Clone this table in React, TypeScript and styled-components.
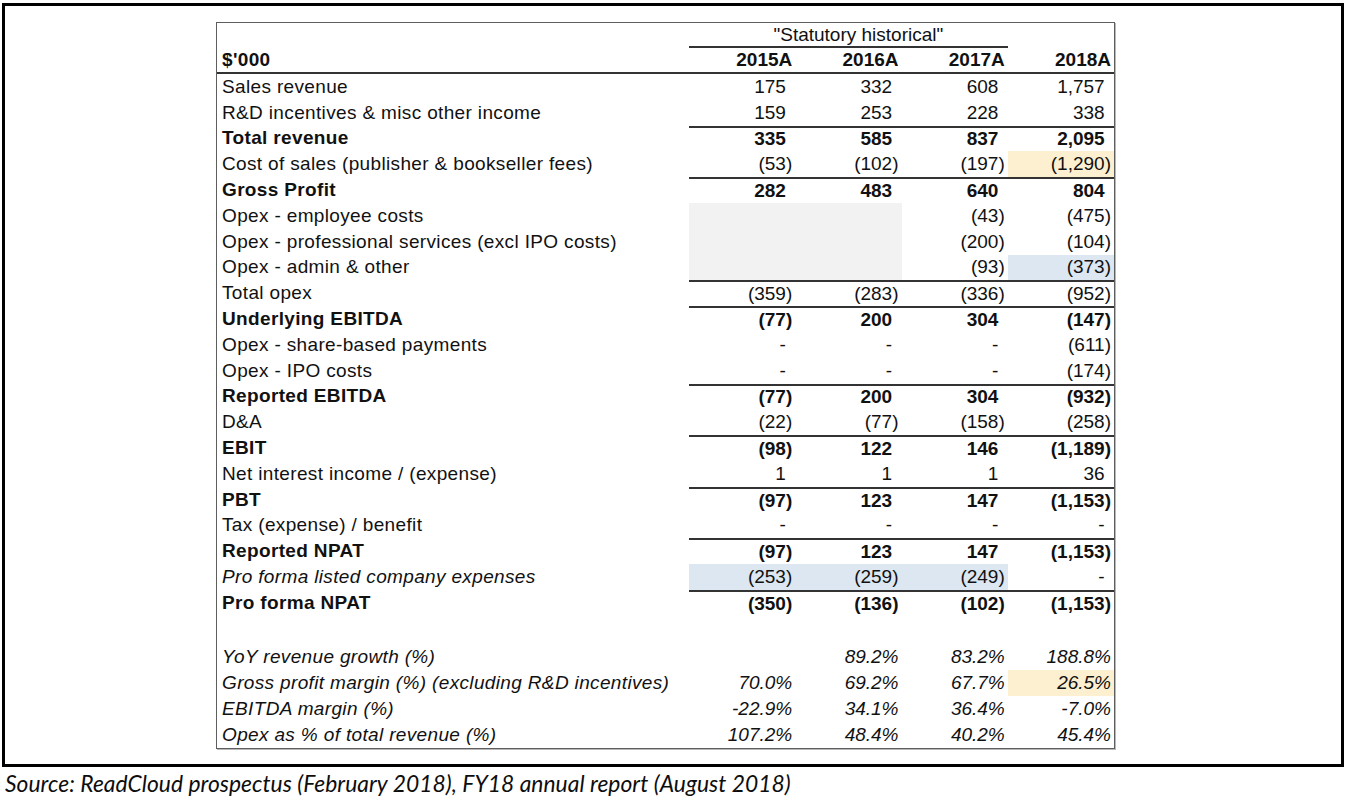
import React from 'react';
import styled, { createGlobalStyle } from 'styled-components';

const GlobalStyle = createGlobalStyle`
  body {
    margin: 0;
    background: #ffffff;
    font-family: "Liberation Sans", Arial, sans-serif;
    color: #111;
  }
`;

const Frame = styled.div`
  box-sizing: border-box;
  margin: 3px 0 0 2px;
  width: 1342px;
  height: 764px;
  border: 3px solid #000;
  padding: 16px 0 0 211px;
`;

const Sheet = styled.div`
  box-sizing: border-box;
  width: 899px;
  border: 1px solid #5e5e5e;
  box-shadow: 1px 1px 0 #b8b8b8;
  background: #fff;
`;

const Row = styled.div<{ $h: number }>`
  display: grid;
  grid-template-columns: 472px repeat(4, 1fr);
  height: ${(p) => p.$h}px;
`;

const Label = styled.div<{ $bold?: boolean; $italic?: boolean; $rule?: boolean }>`
  box-sizing: border-box;
  display: flex;
  align-items: center;
  padding-left: 5px;
  font-size: 19px;
  letter-spacing: 0.35px;
  white-space: nowrap;
  font-weight: ${(p) => (p.$bold ? 700 : 400)};
  font-style: ${(p) => (p.$italic ? 'italic' : 'normal')};
  border-bottom: ${(p) => (p.$rule ? '2px solid #333' : 'none')};
`;

const Num = styled.div<{ $bold?: boolean; $italic?: boolean; $fill?: string; $rule?: boolean }>`
  box-sizing: border-box;
  display: flex;
  align-items: center;
  justify-content: flex-end;
  padding-right: 3px;
  font-size: 19px;
  white-space: nowrap;
  font-weight: ${(p) => (p.$bold ? 700 : 400)};
  font-style: ${(p) => (p.$italic ? 'italic' : 'normal')};
  background: ${(p) => p.$fill || 'transparent'};
  border-top: ${(p) => (p.$rule ? '2px solid #333' : 'none')};
`;

const YearCell = styled(Num)`
  border-bottom: 2px solid #333;
  font-weight: 700;
`;

const GroupTitle = styled.div`
  grid-column: 2 / span 3;
  display: flex;
  align-items: center;
  justify-content: center;
  font-size: 19px;
  border-bottom: 2px solid #333;
  padding-left: 20px;
`;

const Pad = styled.span`
  visibility: hidden;
`;

const Caption = styled.div`
  margin: 2px 0 0 5px;
  font-family: Lato, "Open Sans", sans-serif;
  font-style: italic;
  font-size: 22.8px;
  letter-spacing: 0.05px;
  color: #0d0d0d;
`;

const GREY = '#f2f2f2';
const BLUE = '#dde7f2';
const YELLOW = '#fdf0d0';

type Line = {
  label: string;
  values: string[];
  bold?: boolean;
  italic?: boolean;
  rule?: boolean;
  fills?: (string | undefined)[];
};

const lines: Line[] = [
  { label: 'Sales revenue', values: ['175', '332', '608', '1,757'] },
  { label: 'R&D incentives & misc other income', values: ['159', '253', '228', '338'] },
  { label: 'Total revenue', values: ['335', '585', '837', '2,095'], bold: true, rule: true },
  {
    label: 'Cost of sales (publisher & bookseller fees)',
    values: ['(53)', '(102)', '(197)', '(1,290)'],
    fills: [undefined, undefined, undefined, YELLOW],
  },
  { label: 'Gross Profit', values: ['282', '483', '640', '804'], bold: true, rule: true },
  { label: 'Opex - employee costs', values: ['', '', '(43)', '(475)'], fills: [GREY, GREY] },
  { label: 'Opex - professional services (excl IPO costs)', values: ['', '', '(200)', '(104)'], fills: [GREY, GREY] },
  { label: 'Opex - admin & other', values: ['', '', '(93)', '(373)'], fills: [GREY, GREY, undefined, BLUE] },
  { label: 'Total opex', values: ['(359)', '(283)', '(336)', '(952)'], rule: true },
  { label: 'Underlying EBITDA', values: ['(77)', '200', '304', '(147)'], bold: true, rule: true },
  { label: 'Opex - share-based payments', values: ['-', '-', '-', '(611)'] },
  { label: 'Opex - IPO costs', values: ['-', '-', '-', '(174)'] },
  { label: 'Reported EBITDA', values: ['(77)', '200', '304', '(932)'], bold: true, rule: true },
  { label: 'D&A', values: ['(22)', '(77)', '(158)', '(258)'] },
  { label: 'EBIT', values: ['(98)', '122', '146', '(1,189)'], bold: true, rule: true },
  { label: 'Net interest income / (expense)', values: ['1', '1', '1', '36'] },
  { label: 'PBT', values: ['(97)', '123', '147', '(1,153)'], bold: true, rule: true },
  { label: 'Tax (expense) / benefit', values: ['-', '-', '-', '-'] },
  { label: 'Reported NPAT', values: ['(97)', '123', '147', '(1,153)'], bold: true, rule: true },
  {
    label: 'Pro forma listed company expenses',
    values: ['(253)', '(259)', '(249)', '-'],
    italic: true,
    fills: [BLUE, BLUE, BLUE],
  },
  { label: 'Pro forma NPAT', values: ['(350)', '(136)', '(102)', '(1,153)'], bold: true, rule: true },
];

const ratios: Line[] = [
  { label: 'YoY revenue growth (%)', values: ['', '89.2%', '83.2%', '188.8%'] },
  {
    label: 'Gross profit margin (%) (excluding R&D incentives)',
    values: ['70.0%', '69.2%', '67.7%', '26.5%'],
    fills: [undefined, undefined, undefined, YELLOW],
  },
  { label: 'EBITDA margin (%)', values: ['-22.9%', '34.1%', '36.4%', '-7.0%'] },
  { label: 'Opex as % of total revenue (%)', values: ['107.2%', '48.4%', '40.2%', '45.4%'] },
];

function Amount({ v }: { v: string }) {
  if (v === '' || v.startsWith('(')) return <>{v}</>;
  return (
    <>
      {v}
      <Pad>)</Pad>
    </>
  );
}

export default function App() {
  return (
    <>
      <GlobalStyle />
      <Frame>
        <Sheet>
          <Row $h={25}>
            <Label />
            <GroupTitle>"Statutory historical"</GroupTitle>
            <Num />
          </Row>
          <Row $h={26}>
            <Label $bold $rule>
              $'000
            </Label>
            {['2015A', '2016A', '2017A', '2018A'].map((y) => (
              <YearCell key={y}>{y}</YearCell>
            ))}
          </Row>
          {lines.map((l) => (
            <Row $h={25.8} key={l.label}>
              <Label $bold={l.bold} $italic={l.italic}>
                {l.label}
              </Label>
              {l.values.map((v, i) => (
                <Num key={i} $bold={l.bold} $rule={l.rule} $fill={l.fills?.[i]}>
                  <Amount v={v} />
                </Num>
              ))}
            </Row>
          ))}
          <Row $h={28} />
          {ratios.map((l) => (
            <Row $h={26} key={l.label}>
              <Label $italic>{l.label}</Label>
              {l.values.map((v, i) => (
                <Num key={i} $italic $fill={l.fills?.[i]}>
                  {v}
                </Num>
              ))}
            </Row>
          ))}
        </Sheet>
      </Frame>
      <Caption>Source: ReadCloud prospectus (February 2018), FY18 annual report (August 2018)</Caption>
    </>
  );
}
